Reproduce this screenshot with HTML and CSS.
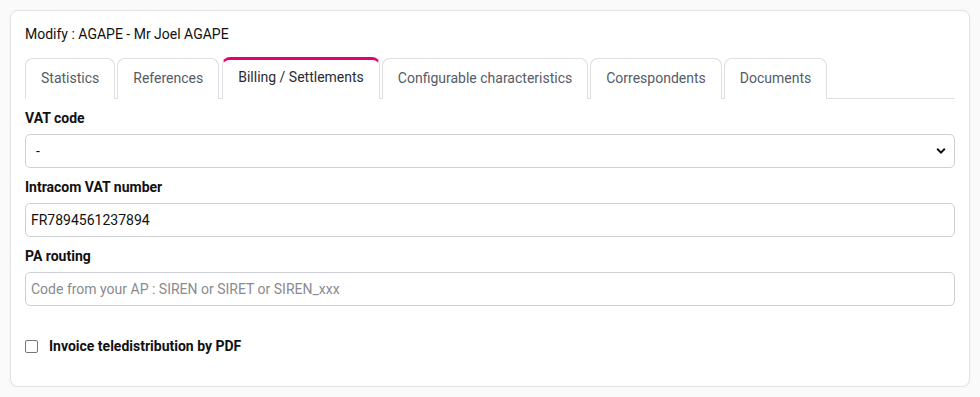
FILE: index.html
```
<!DOCTYPE html>
<html>
<head>
<meta charset="utf-8">
<link rel="stylesheet" href="styles.css">
</head>
<body>
<div class="card">
  <div class="title">Modify : AGAPE - Mr Joel AGAPE</div>
  <div class="tabs">
    <div class="tab">Statistics</div>
    <div class="tab">References</div>
    <div class="tab active">Billing / Settlements</div>
    <div class="tab">Configurable characteristics</div>
    <div class="tab">Correspondents</div>
    <div class="tab">Documents</div>
  </div>
  <div class="field first">
    <label class="label">VAT code</label>
    <div class="select">
      <span>-</span>
      <svg class="chev" width="10" height="8" viewBox="0 0 10 8"><path d="M1.2 1.8 L5 5.6 L8.8 1.8" fill="none" stroke="#111" stroke-width="2"/></svg>
    </div>
  </div>
  <div class="field">
    <label class="label">Intracom VAT number</label>
    <div class="input">FR7894561237894</div>
  </div>
  <div class="field">
    <label class="label">PA routing</label>
    <div class="input placeholder">Code from your AP : SIREN or SIRET or SIREN_xxx</div>
  </div>
  <div class="check">
    <span class="box"></span>
    <span class="check-label">Invoice teledistribution by PDF</span>
  </div>
</div>
</body>
</html>
```
FILE: styles.css
```
html, body {
  margin: 0;
  padding: 0;
  background: #fafafa;
  font-family: Roboto, "Liberation Sans", sans-serif;
  font-size: 14px;
  color: #111;
}
.card {
  box-sizing: border-box;
  margin: 10px 10px 0 10px;
  width: 960px;
  height: 377px;
  background: #fff;
  border: 1px solid #e1e1e8;
  border-radius: 8px;
  padding: 14px 14px 0 14px;
  box-shadow: 0 1px 3px rgba(0,0,0,0.04);
}
.title {
  line-height: 18px;
  height: 18px;
  color: #111;
}
.tabs {
  display: flex;
  gap: 2px;
  margin-top: 14px;
  border-bottom: 1px solid #dedee4;
  height: 41px;
  align-items: flex-end;
}
.tab {
  box-sizing: border-box;
  height: 41px;
  padding: 9px 15px 0 15px;
  line-height: 20px;
  border: 1px solid #dedee4;
  border-bottom: none;
  border-radius: 8px 8px 0 0;
  color: #555b66;
  margin-bottom: -1px;
  background: #fff;
}
.tab.active {
  border-top: 3px solid #e5006e;
  border-left: 1px solid #e0e0e6;
  border-right: 1px solid #e0e0e6;
  padding-top: 7px;
  height: 42px;
  color: #2b2b33;
  margin-left: 1px;
}
.field {
  margin-top: 9px;
}
.field.first {
  margin-top: 9px;
}
.label {
  display: block;
  font-weight: bold;
  line-height: 20px;
  margin-bottom: 6px;
}
.select, .input {
  box-sizing: border-box;
  height: 34px;
  border: 1px solid #cfcfd6;
  border-radius: 5px;
  display: flex;
  align-items: center;
  line-height: 20px;
  background: #fff;
}
.select {
  padding: 0 8px 0 10px;
  justify-content: space-between;
}
.input {
  padding: 0 5px;
}
.placeholder {
  color: #8a8a90;
}
.chev {
  display: block;
}
.check {
  display: flex;
  align-items: center;
  margin-top: 30px;
  line-height: 20px;
}
.box {
  box-sizing: border-box;
  width: 13px;
  height: 13px;
  border: 1px solid #767676;
  border-radius: 2px;
  margin-right: 11px;
}
.check-label {
  font-weight: bold;
}
```
